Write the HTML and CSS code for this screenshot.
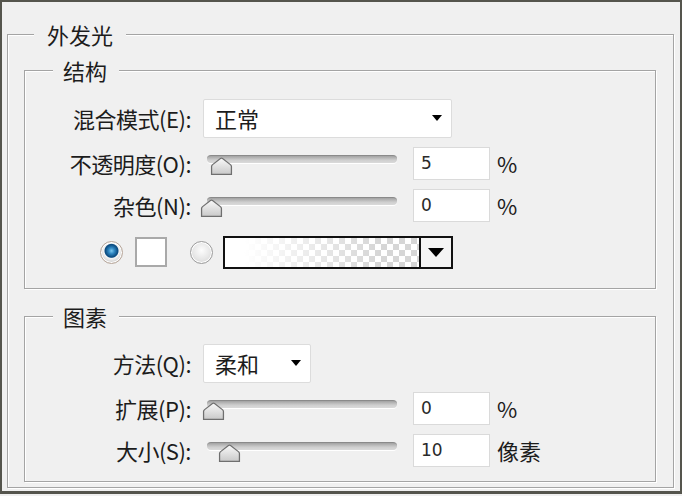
FILE: index.html
```html
<!DOCTYPE html>
<html lang="zh-CN">
<head>
    <meta charset="UTF-8">
    <title>外发光</title>
    <link rel="stylesheet" href="styles.css">
</head>
<body>
    <div class="window">
        <fieldset class="group outer">
            <legend>外发光</legend>

            <fieldset class="group section top">
                <legend>结构</legend>
                <div class="row r1">
                    <label class="label">混合模式(E):</label>
                    <div class="select wide">
                        <span>正常</span>
                        <span class="arrow"></span>
                    </div>
                </div>
                <div class="row r2">
                    <label class="label">不透明度(O):</label>
                    <div class="slider">
                        <div class="track"></div>
                        <svg class="thumb" style="left: 3px" width="23" height="19" viewBox="0 0 22 18"><defs><linearGradient id="tg" x1="0" y1="0" x2="0" y2="1"><stop offset="0" stop-color="#fafafa"/><stop offset="1" stop-color="#c9c9c9"/></linearGradient></defs><path d="M1.5 16.5 L1.5 9 Q1.5 8 2.5 7.2 L10 1.3 Q11 0.6 12 1.3 L19.5 7.2 Q20.5 8 20.5 9 L20.5 16.5 Z" fill="url(#tg)" stroke="#6f6f6f" stroke-width="1.2"/></svg>
                    </div>
                    <input class="num" type="text" value="5">
                    <span class="unit">%</span>
                </div>
                <div class="row r3">
                    <label class="label">杂色(N):</label>
                    <div class="slider">
                        <div class="track"></div>
                        <svg class="thumb" style="left: -7px" width="23" height="19" viewBox="0 0 22 18"><path d="M1.5 16.5 L1.5 9 Q1.5 8 2.5 7.2 L10 1.3 Q11 0.6 12 1.3 L19.5 7.2 Q20.5 8 20.5 9 L20.5 16.5 Z" fill="url(#tg)" stroke="#6f6f6f" stroke-width="1.2"/></svg>
                    </div>
                    <input class="num" type="text" value="0">
                    <span class="unit">%</span>
                </div>
                <div class="row r4 colors">
                    <span class="radio on"></span>
                    <span class="swatch"></span>
                    <span class="radio"></span>
                    <div class="gradient">
                        <div class="ramp"></div>
                        <div class="drop"><span class="arrow big"></span></div>
                    </div>
                </div>
            </fieldset>

            <fieldset class="group section bottom">
                <legend>图素</legend>
                <div class="row r5">
                    <label class="label">方法(Q):</label>
                    <div class="select narrow">
                        <span>柔和</span>
                        <span class="arrow"></span>
                    </div>
                </div>
                <div class="row r6">
                    <label class="label">扩展(P):</label>
                    <div class="slider">
                        <div class="track"></div>
                        <svg class="thumb" style="left: -5px" width="23" height="19" viewBox="0 0 22 18"><path d="M1.5 16.5 L1.5 9 Q1.5 8 2.5 7.2 L10 1.3 Q11 0.6 12 1.3 L19.5 7.2 Q20.5 8 20.5 9 L20.5 16.5 Z" fill="url(#tg)" stroke="#6f6f6f" stroke-width="1.2"/></svg>
                    </div>
                    <input class="num" type="text" value="0">
                    <span class="unit">%</span>
                </div>
                <div class="row r7">
                    <label class="label">大小(S):</label>
                    <div class="slider">
                        <div class="track"></div>
                        <svg class="thumb" style="left: 11px" width="23" height="19" viewBox="0 0 22 18"><path d="M1.5 16.5 L1.5 9 Q1.5 8 2.5 7.2 L10 1.3 Q11 0.6 12 1.3 L19.5 7.2 Q20.5 8 20.5 9 L20.5 16.5 Z" fill="url(#tg)" stroke="#6f6f6f" stroke-width="1.2"/></svg>
                    </div>
                    <input class="num" type="text" value="10">
                    <span class="unit">像素</span>
                </div>
            </fieldset>
        </fieldset>
    </div>
</body>
</html>
```
FILE: styles.css
```css
body {
    margin: 0;
    background: #f0f0f0;
    font-family: "Noto Sans CJK SC", "Noto Sans", sans-serif;
    color: #1c1c1c;
}
.window {
    width: 682px;
    height: 494px;
    box-sizing: border-box;
    border: 2px solid #55554d;
    border-bottom-width: 3px;
    background: #f0f0f0;
    padding: 20px 6px 0 5px;
    overflow: hidden;
}
.group {
    margin: 0;
    padding: 0;
    min-width: 0;
    border: 1px solid #a4a4a4;
    box-shadow: inset 1px 1px 0 #fff, 1px 1px 0 #fff;
}
.group legend {
    font-size: 22px;
    line-height: 24px;
    background: #f0f0f0;
}
.outer legend {
    margin-left: 26px;
    padding: 0 13px;
}
.section {
    margin: 12px 17px 0 16px;
}
.section legend {
    margin-left: 28px;
    padding: 0 12px 0 10px;
}
.top {
    padding: 16px 0 16px 0;
}
.bottom {
    margin-top: 15px;
    margin-bottom: 5px;
    padding: 15px 0 11px 0;
}
.row {
    display: flex;
    align-items: center;
    height: 40px;
}
.r2, .r6 { margin-top: 5px; }
.r3, .r7 { margin-top: 2px; }
.r4 { margin-top: 7px; }
.label {
    width: 166px;
    margin-right: 12px;
    text-align: right;
    font-size: 22px;
    line-height: 24px;
    letter-spacing: -0.5px;
    white-space: nowrap;
}
.select {
    height: 39px;
    box-sizing: border-box;
    background: #fff;
    border: 1px solid #dcdcdc;
    border-radius: 2px;
    display: flex;
    align-items: center;
    justify-content: space-between;
    padding: 0 9px 0 11px;
    font-size: 22px;
}
.select.wide { width: 249px; }
.select.narrow { width: 108px; }
.arrow {
    width: 0;
    height: 0;
    border-left: 5px solid transparent;
    border-right: 5px solid transparent;
    border-top: 6px solid #000;
}
.arrow.big {
    border-left-width: 8px;
    border-right-width: 8px;
    border-top-width: 9px;
}
.slider {
    position: relative;
    width: 190px;
    height: 24px;
    margin: 8px 16px 0 4px;
}
.track {
    height: 8px;
    box-sizing: border-box;
    border-radius: 4px;
    border-top: 1px solid #8a8a8a;
    background: linear-gradient(#a2a2a2, #cfcfcf 60%, #dadada);
    box-shadow: 0 1px 0 #fff;
}
.thumb {
    position: absolute;
    top: 2px;
}
.num {
    width: 77px;
    height: 33px;
    box-sizing: border-box;
    border: 1px solid #dadada;
    background: #fff;
    padding: 0 7px;
    font-family: "DejaVu Sans", sans-serif;
    font-size: 17px;
    color: #2a2a2a;
    outline: none;
}
.unit {
    margin-left: 7px;
    font-size: 22px;
}
.colors {
    padding-left: 75px;
}
.radio {
    width: 23px;
    height: 23px;
    box-sizing: border-box;
    border-radius: 50%;
    border: 1px solid #9d9d9d;
    background: radial-gradient(circle at 50% 40%, #fdfdfd 0, #e6e6e6 55%, #cfcfcf 100%);
    box-shadow: inset 0 0 0 1px #fff;
}
.radio.on {
    border-color: #b8a79a;
    background: radial-gradient(circle at 50% 42%, #7cc8ef 0, #2e86c1 3px, #0e4f84 6px, #0e4f84 6.5px, #f5f5f5 7.5px, #d5d5d5 11px);
}
.swatch {
    width: 32px;
    height: 30px;
    box-sizing: border-box;
    margin-left: 12px;
    margin-right: 23px;
    background: #fff;
    border: 2px solid #a9a9a9;
}
.gradient {
    display: flex;
    width: 230px;
    height: 33px;
    box-sizing: border-box;
    margin-left: 10px;
    border: 2px solid #111;
}
.ramp {
    flex: 1;
    background:
        linear-gradient(to right, #fff 0, #fff 10%, rgba(255,255,255,0) 80%),
        repeating-conic-gradient(#d6d6d6 0 25%, #fff 0 50%) 0 0 / 12px 12px;
}
.drop {
    width: 30px;
    border-left: 2px solid #111;
    background: #f4f4f4;
    display: flex;
    align-items: center;
    justify-content: center;
}
```
